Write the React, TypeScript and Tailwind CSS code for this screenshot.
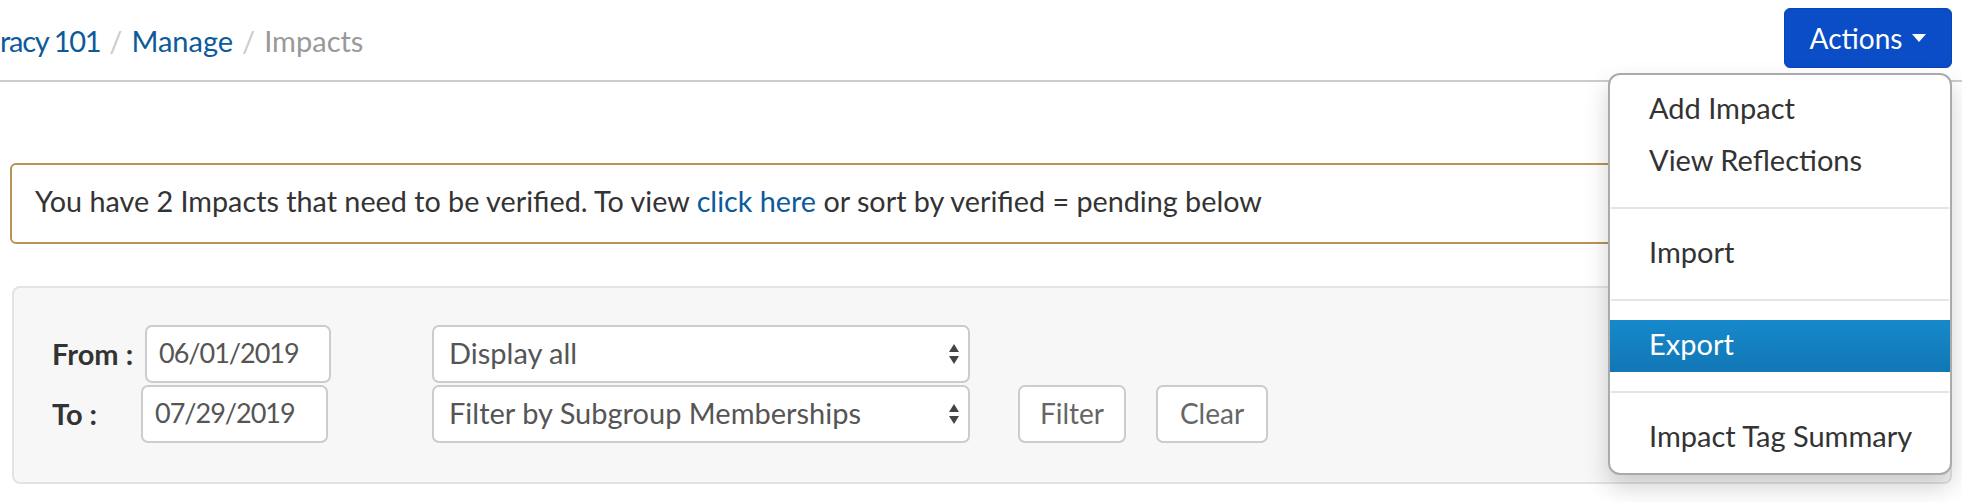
const menuItems = [
  ["Add Impact", "View Reflections"],
  ["Import"],
  ["Export"],
  ["Impact Tag Summary"],
];

function SelectArrows() {
  return (
    <svg width="12" height="22" viewBox="0 0 12 22" className="shrink-0">
      <path d="M6 1 L11 9 L1 9 Z" fill="#444" />
      <path d="M6 21 L11 13 L1 13 Z" fill="#444" />
    </svg>
  );
}

export default function App() {
  return (
    <div className="relative w-[1962px] h-[502px] overflow-hidden bg-white font-['Lato',sans-serif] text-[#333]">
      {/* header / breadcrumb */}
      <div className="flex items-start justify-between h-[82px] border-b-2 border-[#cccccc] pr-[10px]">
        <div className="flex items-center pt-[23px] text-[29px] leading-[36px]">
          <span className="tracking-[-1.3px] text-[#0d5a9b]">racy 101</span>
          <span className="px-[9px] text-[#cccccc]">/</span>
          <span className="text-[#0d5a9b]">Manage</span>
          <span className="px-[9px] text-[#cccccc]">/</span>
          <span className="text-[#999999]">Impacts</span>
        </div>
        <button className="mt-[8px] flex items-center gap-[10px] h-[60px] w-[168px] justify-center rounded-[6px] bg-[#0b4cc7] text-white text-[28px] border border-[#0a45b5]">
          Actions
          <svg width="14" height="8" viewBox="0 0 14 8">
            <path d="M0 0 L14 0 L7 8 Z" fill="#fff" />
          </svg>
        </button>
      </div>

      {/* alert */}
      <div className="mx-[10px] mt-[81px] h-[81px] flex items-center pl-[23px] pb-[4px] border-2 border-[#b99256] rounded-[6px] text-[28.75px] text-[#333]">
        You have 2 Impacts that need to be verified. To view&nbsp;
        <span className="text-[#0d5a9b]">click here</span>
        &nbsp;or sort by verified = pending below
      </div>

      {/* filter well */}
      <div className="ml-[12px] mr-[10px] mt-[42px] h-[198px] bg-[#f7f7f7] border-2 border-[#e3e3e3] rounded-[8px] pl-[38px] pt-[37px]">
        <div className="flex items-end">
          <div className="flex flex-col gap-[2px]">
            <div className="flex items-center">
              <span className="w-[93px] text-[29px] font-bold text-[#333]">From :</span>
              <div className="w-[186px] h-[58px] flex items-center pl-[12px] pb-[2px] bg-white border-2 border-[#cccccc] rounded-[7px] text-[27px] tracking-[-1px] text-[#555]">
                06/01/2019
              </div>
            </div>
            <div className="flex items-center">
              <span className="w-[89px] text-[29px] font-bold text-[#333]">To :</span>
              <div className="w-[187px] h-[58px] flex items-center pl-[12px] pb-[2px] bg-white border-2 border-[#cccccc] rounded-[7px] text-[27px] tracking-[-1px] text-[#555]">
                07/29/2019
              </div>
            </div>
          </div>

          <div className="ml-[101px] flex flex-col gap-[2px]">
            <div className="w-[538px] h-[58px] flex items-center justify-between pl-[15px] pr-[8px] bg-white border-2 border-[#cccccc] rounded-[7px] text-[29px] text-[#555]">
              <span className="pb-[3px]">Display all</span>
              <SelectArrows />
            </div>
            <div className="w-[538px] h-[58px] flex items-center justify-between pl-[15px] pr-[8px] bg-white border-2 border-[#cccccc] rounded-[7px] text-[29px] text-[#555]">
              <span className="pb-[3px]">Filter by Subgroup Memberships</span>
              <SelectArrows />
            </div>
          </div>

          <div className="ml-[48px] flex gap-[30px]">
            <button className="w-[108px] h-[58px] pb-[2px] bg-white border-2 border-[#cccccc] rounded-[7px] text-[28px] text-[#666]">
              Filter
            </button>
            <button className="w-[112px] h-[58px] pb-[2px] bg-white border-2 border-[#cccccc] rounded-[7px] text-[28px] text-[#666]">
              Clear
            </button>
          </div>
        </div>
      </div>

      {/* actions dropdown */}
      <div className="absolute top-[73px] right-[10px] w-[344px] py-[9px] bg-white border-2 border-[#aaaaaa] rounded-[12px] shadow-[0_12px_24px_rgba(0,0,0,0.18)]">
        {menuItems.map((group, gi) => (
          <div key={gi}>
            {gi > 0 && <div className="my-[19px] mx-[1px] h-[2px] bg-[#e5e5e5]" />}
            {group.map((label) => (
              <div
                key={label}
                className={
                  label === "Export"
                    ? "h-[52px] flex items-center pl-[39px] pb-[4px] text-[29px] text-white bg-gradient-to-b from-[#1689cb] to-[#1277b5]"
                    : "h-[52px] flex items-center pl-[39px] pb-[4px] text-[29px] text-[#333]"
                }
              >
                {label}
              </div>
            ))}
          </div>
        ))}
      </div>
    </div>
  );
}
